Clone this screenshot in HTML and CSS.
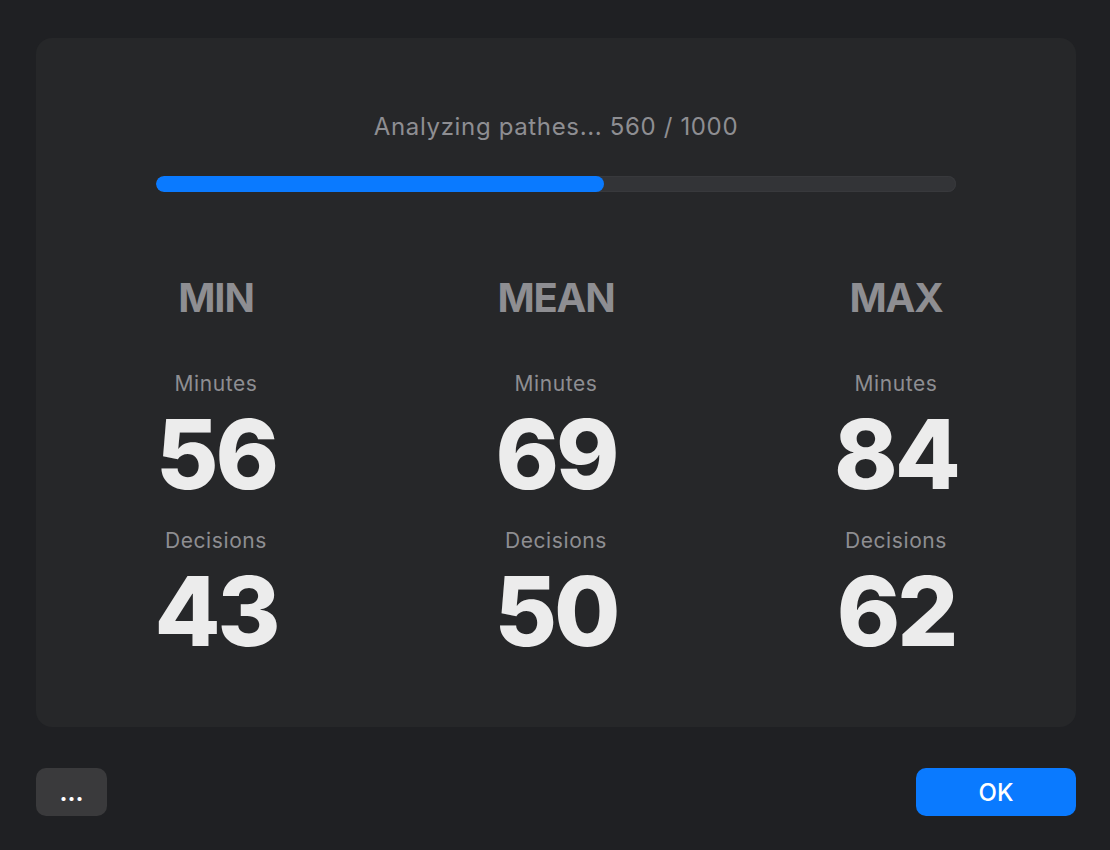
FILE: index.html
```html
<!DOCTYPE html>
<html lang="en">
<head>
<meta charset="utf-8">
<title>Analyzing</title>
<link rel="stylesheet" href="styles.css">
</head>
<body>
<div class="window">
  <section class="card">
    <div class="status">Analyzing pathes... 560 / 1000</div>
    <div class="track"><div class="fill" style="width:56%"></div></div>
    <div class="stats">
      <div class="col">
        <div class="head">MIN</div>
        <div class="label first">Minutes</div>
        <div class="value">56</div>
        <div class="label">Decisions</div>
        <div class="value">43</div>
      </div>
      <div class="col">
        <div class="head">MEAN</div>
        <div class="label first">Minutes</div>
        <div class="value">69</div>
        <div class="label">Decisions</div>
        <div class="value">50</div>
      </div>
      <div class="col">
        <div class="head">MAX</div>
        <div class="label first">Minutes</div>
        <div class="value">84</div>
        <div class="label">Decisions</div>
        <div class="value">62</div>
      </div>
    </div>
  </section>
  <footer class="footer">
    <button class="btn btn-more">...</button>
    <button class="btn btn-ok">OK</button>
  </footer>
</div>
</body>
</html>
```

FILE: styles.css
```css
html, body {
  margin: 0;
  padding: 0;
  background: #1f2023;
}
body {
  font-family: Inter, "Noto Sans", "Liberation Sans", sans-serif;
  width: 1110px;
  height: 850px;
  overflow: hidden;
}
.window {
  padding: 38px 34px 0 36px;
  display: flex;
  flex-direction: column;
}
.card {
  background: #262729;
  border-radius: 16px;
  height: 689px;
  box-sizing: border-box;
  padding: 74px 10px 0;
  display: flex;
  flex-direction: column;
  align-items: center;
}
.status {
  font-size: 24px;
  line-height: 30px;
  color: #8e8e92;
  letter-spacing: 0.65px;
}
.track {
  margin-top: 34px;
  width: 800px;
  height: 16px;
  border-radius: 8px;
  background: #333437;
  box-shadow: inset 0 0 0 1px #38393c;
  overflow: hidden;
}
.fill {
  height: 100%;
  background: #0a7aff;
  border-radius: 8px;
}
.stats {
  margin-top: 82px;
  width: 1020px;
  display: grid;
  grid-template-columns: repeat(3, 1fr);
}
.col {
  display: flex;
  flex-direction: column;
  align-items: center;
  text-align: center;
}
.head {
  font-size: 40px;
  line-height: 48px;
  font-weight: 700;
  color: #8e8e92;
  letter-spacing: -1.2px;
}
.label {
  font-size: 21px;
  line-height: 24px;
  color: #8e8e92;
  margin-top: 25px;
  letter-spacing: 0.6px;
}
.label.first {
  margin-top: 50px;
}
.value {
  font-size: 96px;
  line-height: 100px;
  font-weight: 800;
  color: #ececec;
  margin-top: 8px;
  letter-spacing: -3px;
}
.footer {
  margin-top: 41px;
  display: flex;
  justify-content: space-between;
}
.btn {
  height: 48px;
  border: none;
  border-radius: 10px;
  font-family: inherit;
  color: #ffffff;
  padding: 0;
}
.btn-more {
  width: 71px;
  background: #3a3a3c;
  font-size: 24px;
  font-weight: 700;
}
.btn-ok {
  width: 160px;
  background: #0a7aff;
  font-size: 24px;
  font-weight: 500;
}
```
